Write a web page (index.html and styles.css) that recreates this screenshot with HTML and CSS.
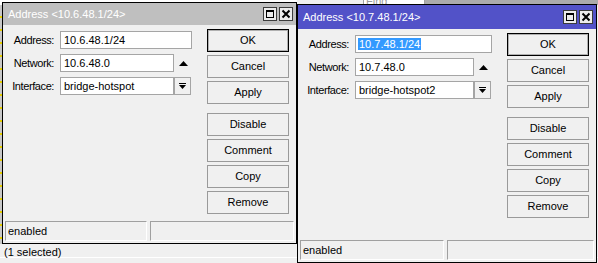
FILE: index.html
```html
<!DOCTYPE html>
<html>
<head>
<meta charset="utf-8">
<link rel="stylesheet" href="styles.css">
</head>
<body>
<div class="desktop">
  <div class="bg-top">
    <div class="seg-a"></div>
    <div class="seg-b"></div>
    <div class="seg-find"><span>Find</span></div>
    <div class="seg-c"></div>
  </div>
  <div class="bg-mid">
    <div class="bg-list"></div>
    <div class="bg-fill"></div>
  </div>
  <div class="bg-status">(1 selected)</div>

  <div class="win win-1">
    <div class="title">
      <span class="title-text">Address &lt;10.6.48.1/24&gt;</span>
      <div class="title-btns">
        <span class="tbtn"><svg width="12" height="12" viewBox="0 0 12 12"><rect x="2.5" y="2.5" width="7" height="7" fill="none" stroke="#000"/><rect x="2" y="2" width="8" height="2" fill="#000"/></svg></span>
        <span class="tbtn"><svg width="12" height="12" viewBox="0 0 12 12"><path d="M2.5 2.5 L9.5 9.5 M9.5 2.5 L2.5 9.5" stroke="#000" stroke-width="2"/></svg></span>
      </div>
    </div>
    <div class="content">
      <div class="form">
        <span class="label">Address:</span>
        <div class="field-row"><span class="field">10.6.48.1/24</span></div>
        <span class="label">Network:</span>
        <div class="field-row"><span class="field">10.6.48.0</span><span class="aux"><svg width="9" height="5" viewBox="0 0 9 5"><polygon points="0,5 9,5 4.5,0" fill="#000"/></svg></span></div>
        <span class="label">Interface:</span>
        <div class="field-row"><span class="field">bridge-hotspot</span><span class="dd"><svg width="7" height="7" viewBox="0 0 7 7"><rect x="0" y="0" width="7" height="1" fill="#000"/><polygon points="0,2 7,2 3.5,6" fill="#000"/></svg></span></div>
      </div>
      <div class="buttons">
        <span class="btn btn-default">OK</span>
        <span class="btn">Cancel</span>
        <span class="btn">Apply</span>
        <span class="btn btn-sep">Disable</span>
        <span class="btn">Comment</span>
        <span class="btn">Copy</span>
        <span class="btn">Remove</span>
      </div>
    </div>
    <div class="status">
      <span class="panel">enabled</span>
      <span class="panel"></span>
    </div>
  </div>

  <div class="win win-2">
    <div class="title">
      <span class="title-text">Address &lt;10.7.48.1/24&gt;</span>
      <div class="title-btns">
        <span class="tbtn"><svg width="12" height="12" viewBox="0 0 12 12"><rect x="2.5" y="2.5" width="7" height="7" fill="none" stroke="#000"/><rect x="2" y="2" width="8" height="2" fill="#000"/></svg></span>
        <span class="tbtn"><svg width="12" height="12" viewBox="0 0 12 12"><path d="M2.5 2.5 L9.5 9.5 M9.5 2.5 L2.5 9.5" stroke="#000" stroke-width="2"/></svg></span>
      </div>
    </div>
    <div class="content">
      <div class="form">
        <span class="label">Address:</span>
        <div class="field-row"><span class="field"><span class="sel">10.7.48.1/24</span></span></div>
        <span class="label">Network:</span>
        <div class="field-row"><span class="field">10.7.48.0</span><span class="aux"><svg width="9" height="5" viewBox="0 0 9 5"><polygon points="0,5 9,5 4.5,0" fill="#000"/></svg></span></div>
        <span class="label">Interface:</span>
        <div class="field-row"><span class="field">bridge-hotspot2</span><span class="dd"><svg width="7" height="7" viewBox="0 0 7 7"><rect x="0" y="0" width="7" height="1" fill="#000"/><polygon points="0,2 7,2 3.5,6" fill="#000"/></svg></span></div>
      </div>
      <div class="buttons">
        <span class="btn btn-default">OK</span>
        <span class="btn">Cancel</span>
        <span class="btn">Apply</span>
        <span class="btn btn-sep">Disable</span>
        <span class="btn">Comment</span>
        <span class="btn">Copy</span>
        <span class="btn">Remove</span>
      </div>
    </div>
    <div class="status">
      <span class="panel">enabled</span>
      <span class="panel"></span>
    </div>
  </div>
</div>
</body>
</html>
```
FILE: styles.css
```css
* { box-sizing: border-box; margin: 0; padding: 0; }

body {
  width: 598px;
  height: 263px;
  overflow: hidden;
  font-family: "Liberation Sans", Arial, sans-serif;
  font-size: 11px;
  color: #000;
}

.desktop {
  position: relative;
  width: 598px;
  height: 263px;
  overflow: hidden;
  background: #f0f0f0;
  display: flex;
  flex-direction: column;
}

/* background application (behind the dialogs) */
.bg-top { height: 5px; display: flex; }
.seg-a { width: 297px; background: #fff; }
.seg-b { width: 66px; background: #f0f0f0; }
.seg-find {
  width: 62px;
  background: #fff;
  border-left: 1px solid #a0a0a0;
  border-right: 1px solid #a0a0a0;
  overflow: hidden;
  color: #9a9a9a;
  font-size: 11px;
  line-height: 3px;
  padding-left: 2px;
}
.seg-c { flex: 1; background: #ababab; }

.bg-mid { flex: 1; display: flex; }
.bg-list {
  width: 2px;
  background: repeating-linear-gradient(to bottom, #c8c8c8 0 11px, #e6cf00 11px 13px);
}
.bg-fill { flex: 1; }

.bg-status {
  height: 19px;
  padding-left: 4px;
  line-height: 14px;
  border-top: 1px solid #f0f0f0;
  box-shadow: inset 0 -5px 0 #f0f0f0, inset 0 -6px 0 #fff;
}

/* dialog windows */
.win {
  position: absolute;
  border: 1px solid #000;
  background: #f0f0f0;
  display: flex;
  flex-direction: column;
}
.win-1 { left: 2px; top: 2px; width: 295px; height: 242px; }
.win-2 { left: 297px; top: 4px; width: 300px; height: 259px; }

.title {
  height: 22px;
  display: flex;
  align-items: center;
  padding: 0 3px 0 5px;
  color: #fff;
}
.win-1 .title { background: #bfbfbf; }
.win-2 .title { background: #5252c8; height: 24px; }
.title-text { flex: 1; }
.title-btns { display: flex; gap: 2px; }
.tbtn {
  width: 14px;
  height: 14px;
  border: 1px solid #3c3c3c;
  background: #ececec;
  display: flex;
  align-items: center;
  justify-content: center;
}

.content { flex: 1; display: flex; }

.form {
  flex: 1;
  padding: 6px 15px 0 0;
  display: grid;
  grid-template-columns: 51px 1fr;
  column-gap: 6px;
  row-gap: 5px;
  align-content: start;
}
.label {
  text-align: right;
  line-height: 18px;
  white-space: nowrap;
  letter-spacing: -0.4px;
}
.field-row { display: flex; }
.field {
  flex: 1;
  height: 18px;
  border: 1px solid #a5a5a5;
  background: #fff;
  padding-left: 3px;
  line-height: 16px;
  white-space: nowrap;
  overflow: hidden;
}
.sel { background: #3399ff; color: #fff; padding: 0 1px; margin-left: -1px; }
.aux {
  width: 18px;
  display: flex;
  align-items: center;
  justify-content: center;
}
.dd {
  width: 17px;
  height: 18px;
  margin-right: 1px;
  border: 1px solid #a5a5a5;
  background: #f0f0f0;
  display: flex;
  align-items: center;
  justify-content: center;
}

.buttons {
  width: 82px;
  margin-right: 7px;
  padding-top: 4px;
  display: flex;
  flex-direction: column;
  gap: 3px;
}
.btn {
  height: 23px;
  border: 1px solid #9a9a9a;
  background: #f0f0f0;
  text-align: center;
  line-height: 21px;
}
.btn-default { border-color: #000; box-shadow: inset 0 0 0 1px #b0b0b0; }
.btn-sep { margin-top: 6px; }

.status {
  display: grid;
  grid-template-columns: 49% 1fr;
  column-gap: 3px;
  padding: 0 2px 2px 2px;
}
.panel {
  height: 20px;
  border-top: 1px solid #a0a0a0;
  border-left: 1px solid #a0a0a0;
  border-right: 1px solid #fff;
  border-bottom: 1px solid #fff;
  padding-left: 2px;
  line-height: 18px;
}
```
